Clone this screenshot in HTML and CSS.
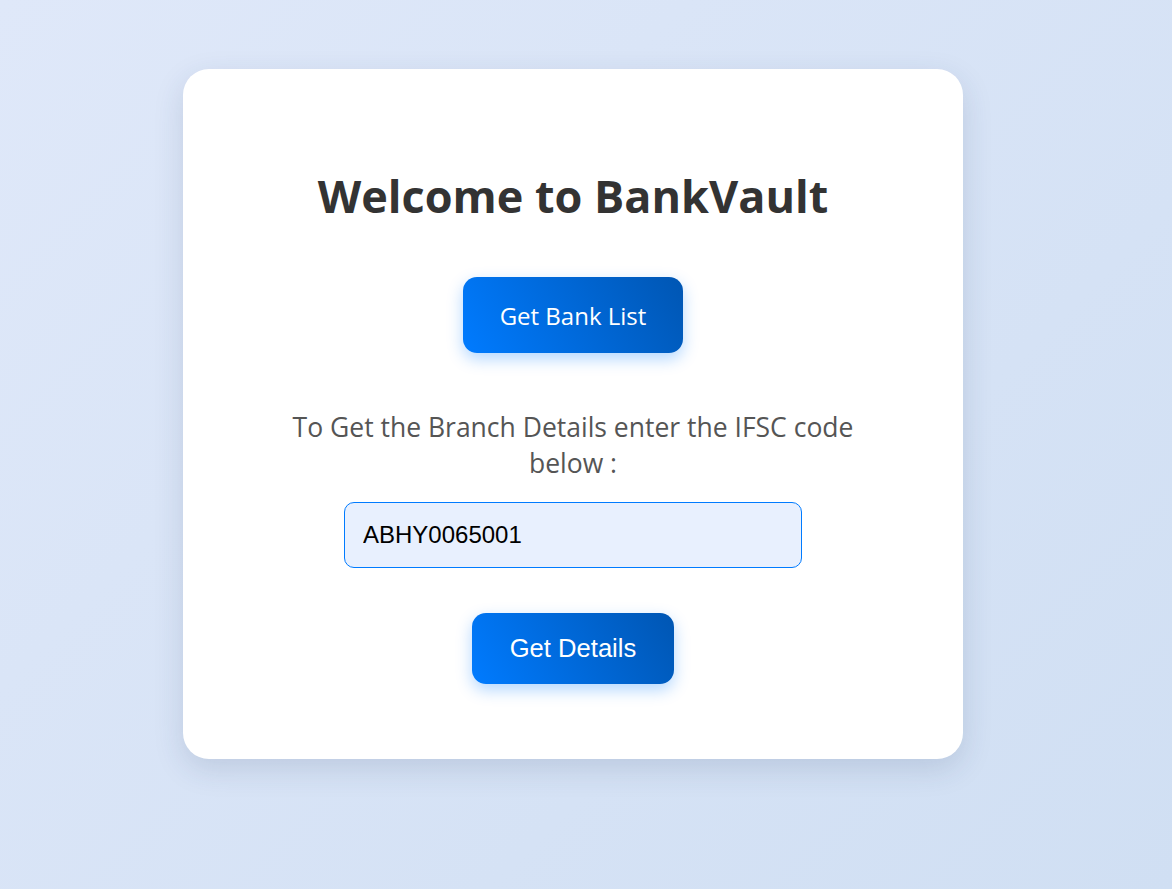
FILE: index.html
```html
<!DOCTYPE html>
<html lang="en">
<head>
<meta charset="utf-8">
<title>BankVault</title>
<link rel="stylesheet" href="styles.css">
</head>
<body>
<main class="page">
  <section class="card">
    <h1 class="title">Welcome to BankVault</h1>
    <button class="btn btn-list" type="button">Get Bank List</button>
    <p class="hint">To Get the Branch Details enter the IFSC code below :</p>
    <input class="ifsc" type="text" value="ABHY0065001">
    <button class="btn btn-details" type="button">Get Details</button>
  </section>
</main>
</body>
</html>
```
FILE: styles.css
```css
html, body {
  margin: 0;
  height: 100%;
}
body {
  background: linear-gradient(135deg, #dfe8f9 0%, #d0dff3 100%);
  font-family: "Open Sans", "Noto Sans", sans-serif;
}
.page {
  display: flex;
  justify-content: center;
  align-items: flex-start;
  padding: 69px 26px 0 0;
}
.card {
  width: 780px;
  height: 690px;
  box-sizing: border-box;
  background: #fff;
  border-radius: 26px;
  box-shadow: 0 10px 30px rgba(40, 60, 100, 0.15);
  display: flex;
  flex-direction: column;
  align-items: center;
  padding: 98px 60px 0;
}
.title {
  margin: 0;
  font-size: 45px;
  line-height: 58px;
  font-weight: 700;
  color: #333;
}
.btn {
  border: none;
  color: #fff;
  cursor: pointer;
  background: linear-gradient(60deg, #007bff 0%, #0056b3 100%);
  border-radius: 14px;
  box-shadow: 0 6px 16px rgba(0, 123, 255, 0.3);
}
.btn-list {
  margin-top: 52px;
  width: 220px;
  height: 76px;
  font-family: "Open Sans", "Noto Sans", sans-serif;
  font-size: 24px;
}
.hint {
  margin: 56px 0 0;
  width: 600px;
  text-align: center;
  font-size: 26.5px;
  line-height: 36px;
  color: #555;
}
.ifsc {
  margin-top: 21px;
  width: 458px;
  height: 66px;
  box-sizing: border-box;
  border: 1px solid #007bff;
  border-radius: 10px;
  background: #e8f0fe;
  padding: 0 18px;
  font-family: "Liberation Sans", Arial, sans-serif;
  font-size: 24px;
  color: #000;
  outline: none;
}
.btn-details {
  margin-top: 45px;
  width: 202px;
  height: 71px;
  font-family: "Liberation Sans", Arial, sans-serif;
  font-size: 25.6px;
}
```
